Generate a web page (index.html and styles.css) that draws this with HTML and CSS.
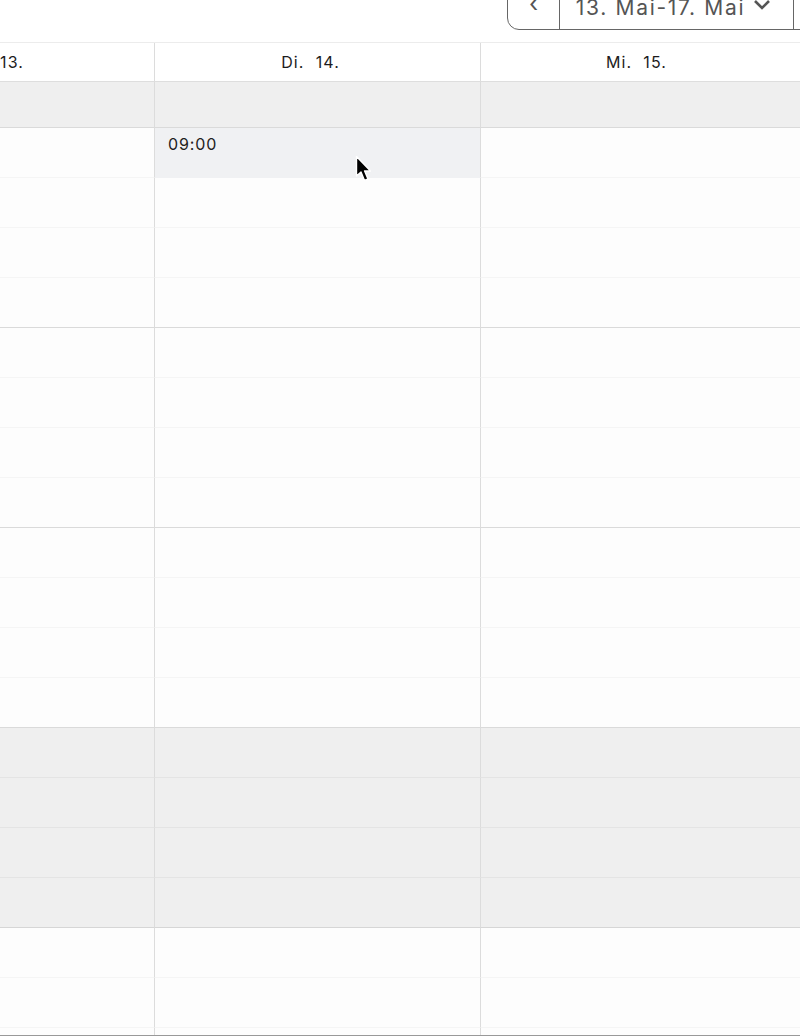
FILE: index.html
```html
<!DOCTYPE html>
<html lang="de">
<head>
  <meta charset="UTF-8" />
  <meta name="viewport" content="width=device-width, initial-scale=1.0"/>
  <title>Wochenansicht</title>
  <link rel="stylesheet" href="styles.css">
</head>
<body>

  <div class="toolbar">
    <div class="btn-group">
      <button class="nav-btn">&lsaquo;</button>
      <button class="range-btn">13. Mai-17. Mai
        <svg class="chevron" width="18" height="12" viewBox="0 0 18 12"><path d="M2 2 L9 9 L16 2" fill="none" stroke="#555" stroke-width="2.6"/></svg>
      </button>
      <button class="nav-btn">&rsaquo;</button>
    </div>
  </div>

  <div class="calendar">
    <div class="row head">
      <div class="cell first">Mo.&nbsp; 13.</div>
      <div class="cell">Di.&nbsp; 14.</div>
      <div class="cell">Mi.&nbsp; 15.</div>
    </div>
    <div class="row allday">
      <div class="cell"></div><div class="cell"></div><div class="cell"></div>
    </div>

    <!-- 09:00 -->
    <div class="row slot"><div class="cell"></div><div class="cell selected">09:00</div><div class="cell"></div></div>
    <div class="row slot"><div class="cell"></div><div class="cell"></div><div class="cell"></div></div>
    <div class="row slot"><div class="cell"></div><div class="cell"></div><div class="cell"></div></div>
    <div class="row slot hour-end"><div class="cell"></div><div class="cell"></div><div class="cell"></div></div>
    <!-- 10:00 -->
    <div class="row slot"><div class="cell"></div><div class="cell"></div><div class="cell"></div></div>
    <div class="row slot"><div class="cell"></div><div class="cell"></div><div class="cell"></div></div>
    <div class="row slot"><div class="cell"></div><div class="cell"></div><div class="cell"></div></div>
    <div class="row slot hour-end"><div class="cell"></div><div class="cell"></div><div class="cell"></div></div>
    <!-- 11:00 -->
    <div class="row slot"><div class="cell"></div><div class="cell"></div><div class="cell"></div></div>
    <div class="row slot"><div class="cell"></div><div class="cell"></div><div class="cell"></div></div>
    <div class="row slot"><div class="cell"></div><div class="cell"></div><div class="cell"></div></div>
    <div class="row slot hour-end"><div class="cell"></div><div class="cell"></div><div class="cell"></div></div>
    <!-- 12:00 pause -->
    <div class="row slot off"><div class="cell"></div><div class="cell"></div><div class="cell"></div></div>
    <div class="row slot off"><div class="cell"></div><div class="cell"></div><div class="cell"></div></div>
    <div class="row slot off"><div class="cell"></div><div class="cell"></div><div class="cell"></div></div>
    <div class="row slot off hour-end"><div class="cell"></div><div class="cell"></div><div class="cell"></div></div>
    <!-- 13:00 -->
    <div class="row slot"><div class="cell"></div><div class="cell"></div><div class="cell"></div></div>
    <div class="row slot"><div class="cell"></div><div class="cell"></div><div class="cell"></div></div>
    <div class="row slot"><div class="cell"></div><div class="cell"></div><div class="cell"></div></div>
  </div>

  <svg class="cursor" width="18" height="28" viewBox="0 0 18 28">
    <path d="M1.5 1.5 L1.5 21 L6 17 L9.5 25.5 L13 24 L9.6 16 L15.5 16 Z" fill="#000" stroke="#fff" stroke-width="1.4" stroke-linejoin="round"/>
  </svg>

</body>
</html>
```

FILE: styles.css
```css
body {
  margin: 0;
  font-family: 'Inter', 'Liberation Sans', sans-serif;
  background: #fff;
  overflow: hidden;
  height: 1036px;
  position: relative;
}

.toolbar {
  display: flex;
  height: 30px;
  padding-left: 507px;
  overflow: hidden;
}

.btn-group {
  display: flex;
  flex-shrink: 0;
  height: 42px;
  margin-top: -14px;
  border: 1.5px solid #666;
  border-radius: 0 0 0 12px;
  background: #fff;
}

.btn-group button {
  border: none;
  background: transparent;
  font-family: 'Inter', 'Liberation Sans', sans-serif;
  color: #555;
  padding: 0;
}

.nav-btn {
  width: 52px;
  font-size: 24px;
  padding-bottom: 10px !important;
  border-right: 1.5px solid #666 !important;
}

.range-btn {
  width: 234px;
  font-size: 21px;
  letter-spacing: 1.7px;
  display: flex;
  align-items: center;
  justify-content: center;
  gap: 8px;
  padding-right: 6px !important;
  padding-bottom: 2px !important;
  border-right: 1.5px solid #666 !important;
}

.chevron {
  margin-top: -4px;
}

.calendar {
  margin-top: 12px;
  margin-left: -171px;
  height: 992px;
  border-top: 1px solid #ececec;
  border-bottom: 1px solid #999;
  overflow: hidden;
}

.row {
  display: grid;
  grid-template-columns: 326px 326px 326px;
}

.cell {
  box-sizing: border-box;
  border-right: 1px solid #dcdcdc;
}

.head .cell {
  height: 39px;
  line-height: 38px;
  text-align: center;
  padding-right: 14px;
  font-size: 16px;
  letter-spacing: 1.1px;
  color: #1c1c1c;
  border-bottom: 1px solid #dedede;
}

.head .cell.first {
  padding-right: 2px;
}

.allday .cell {
  height: 46px;
  background: #efefef;
  border-bottom: 1px solid #dadada;
}

.slot .cell {
  height: 50px;
  background: #fdfdfd;
  border-bottom: 1px solid #f5f5f5;
}

.slot.hour-end .cell {
  border-bottom-color: #dadada;
}

.slot.off .cell {
  background: #efefef;
  border-bottom-color: #e4e4e4;
}

.slot.off.hour-end .cell {
  border-bottom-color: #d6d6d6;
}

.slot .cell.selected {
  background: #f0f1f3;
  padding: 6px 0 0 13px;
  font-size: 16px;
  letter-spacing: 0.9px;
  color: #222;
  border-bottom-color: #f0f1f3;
}

.cursor {
  position: absolute;
  left: 355px;
  top: 155px;
}
```
